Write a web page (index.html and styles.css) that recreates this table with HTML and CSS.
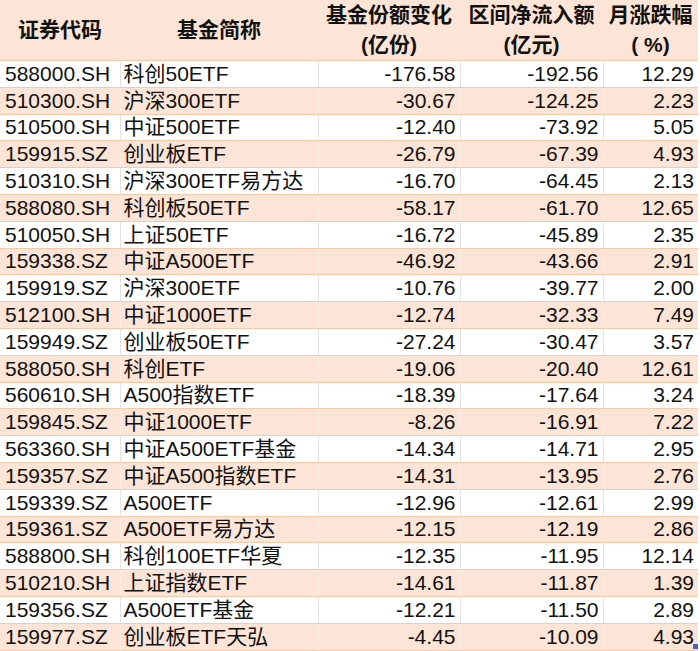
FILE: index.html
```html
<!DOCTYPE html>
<html lang="zh">
<head>
<meta charset="utf-8">
<title>ETF</title>
<link rel="stylesheet" href="styles.css">
</head>
<body>
<div class="sheet">
<table class="grid">
<colgroup>
<col class="c1"><col class="c2"><col class="c3"><col class="c4"><col class="c5">
</colgroup>
<thead>
<tr>
<th>证券代码</th>
<th>基金简称</th>
<th>基金份额变化<br>(亿份)</th>
<th>区间净流入额<br>(亿元)</th>
<th>月涨跌幅<br>( %)</th>
</tr>
</thead>
<tbody>
<tr><td>588000.SH</td><td class="name">科创50ETF</td><td class="num">-176.58</td><td class="num">-192.56</td><td class="num">12.29</td></tr>
<tr><td>510300.SH</td><td class="name">沪深300ETF</td><td class="num">-30.67</td><td class="num">-124.25</td><td class="num">2.23</td></tr>
<tr><td>510500.SH</td><td class="name">中证500ETF</td><td class="num">-12.40</td><td class="num">-73.92</td><td class="num">5.05</td></tr>
<tr><td>159915.SZ</td><td class="name">创业板ETF</td><td class="num">-26.79</td><td class="num">-67.39</td><td class="num">4.93</td></tr>
<tr><td>510310.SH</td><td class="name">沪深300ETF易方达</td><td class="num">-16.70</td><td class="num">-64.45</td><td class="num">2.13</td></tr>
<tr><td>588080.SH</td><td class="name">科创板50ETF</td><td class="num">-58.17</td><td class="num">-61.70</td><td class="num">12.65</td></tr>
<tr><td>510050.SH</td><td class="name">上证50ETF</td><td class="num">-16.72</td><td class="num">-45.89</td><td class="num">2.35</td></tr>
<tr><td>159338.SZ</td><td class="name">中证A500ETF</td><td class="num">-46.92</td><td class="num">-43.66</td><td class="num">2.91</td></tr>
<tr><td>159919.SZ</td><td class="name">沪深300ETF</td><td class="num">-10.76</td><td class="num">-39.77</td><td class="num">2.00</td></tr>
<tr><td>512100.SH</td><td class="name">中证1000ETF</td><td class="num">-12.74</td><td class="num">-32.33</td><td class="num">7.49</td></tr>
<tr><td>159949.SZ</td><td class="name">创业板50ETF</td><td class="num">-27.24</td><td class="num">-30.47</td><td class="num">3.57</td></tr>
<tr><td>588050.SH</td><td class="name">科创ETF</td><td class="num">-19.06</td><td class="num">-20.40</td><td class="num">12.61</td></tr>
<tr><td>560610.SH</td><td class="name">A500指数ETF</td><td class="num">-18.39</td><td class="num">-17.64</td><td class="num">3.24</td></tr>
<tr><td>159845.SZ</td><td class="name">中证1000ETF</td><td class="num">-8.26</td><td class="num">-16.91</td><td class="num">7.22</td></tr>
<tr><td>563360.SH</td><td class="name">中证A500ETF基金</td><td class="num">-14.34</td><td class="num">-14.71</td><td class="num">2.95</td></tr>
<tr><td>159357.SZ</td><td class="name">中证A500指数ETF</td><td class="num">-14.31</td><td class="num">-13.95</td><td class="num">2.76</td></tr>
<tr><td>159339.SZ</td><td class="name">A500ETF</td><td class="num">-12.96</td><td class="num">-12.61</td><td class="num">2.99</td></tr>
<tr><td>159361.SZ</td><td class="name">A500ETF易方达</td><td class="num">-12.15</td><td class="num">-12.19</td><td class="num">2.86</td></tr>
<tr><td>588800.SH</td><td class="name">科创100ETF华夏</td><td class="num">-12.35</td><td class="num">-11.95</td><td class="num">12.14</td></tr>
<tr><td>510210.SH</td><td class="name">上证指数ETF</td><td class="num">-14.61</td><td class="num">-11.87</td><td class="num">1.39</td></tr>
<tr><td>159356.SZ</td><td class="name">A500ETF基金</td><td class="num">-12.21</td><td class="num">-11.50</td><td class="num">2.89</td></tr>
<tr><td>159977.SZ</td><td class="name">创业板ETF天弘</td><td class="num">-4.45</td><td class="num">-10.09</td><td class="num">4.93</td></tr>
</tbody>
</table>
<span class="handle"></span>
</div>
</body>
</html>
```
FILE: styles.css
```css
html, body {
  margin: 0;
  padding: 0;
  background: #ffffff;
}
body {
  font-family: "Liberation Sans", Arial, "Noto Sans CJK SC", sans-serif;
  color: #111111;
}
.sheet {
  position: relative;
  width: 698px;
}
.grid {
  border-collapse: collapse;
  table-layout: fixed;
  width: 698px;
  font-size: 21px;
}
.c1 { width: 120px; }
.c2 { width: 198px; }
.c3 { width: 142px; }
.c4 { width: 143px; }
.c5 { width: 95px; }

.grid th {
  background: #fce4d6;
  font-weight: bold;
  font-family: "Liberation Sans", Arial, "Noto Sans CJK SC", sans-serif;
  line-height: 30px;
  height: 60px;
  padding: 0;
  text-align: center;
  vertical-align: middle;
  border-bottom: 1px solid #f6c9a8;
}
.grid td {
  height: 25.8px;
  line-height: 24px;
  padding: 0 4px 0 5px;
  white-space: nowrap;
  overflow: hidden;
  border-bottom: 1px solid #f6c9a8;
  border-left: 1px solid #e3e3e3;
  vertical-align: middle;
}
.grid td:first-child {
  border-left: none;
}
.grid td.name {
  padding-left: 3px;
}
.grid td.num {
  text-align: right;
}
.grid tbody tr:nth-child(even) td {
  background: #fce4d6;
  border-left-color: #fdeee5;
}
.grid tbody tr:nth-child(even) td:first-child {
  border-left: none;
}
.handle {
  position: absolute;
  right: 0;
  bottom: 2px;
  width: 5px;
  height: 5px;
  background: #4a62b4;
}
```
